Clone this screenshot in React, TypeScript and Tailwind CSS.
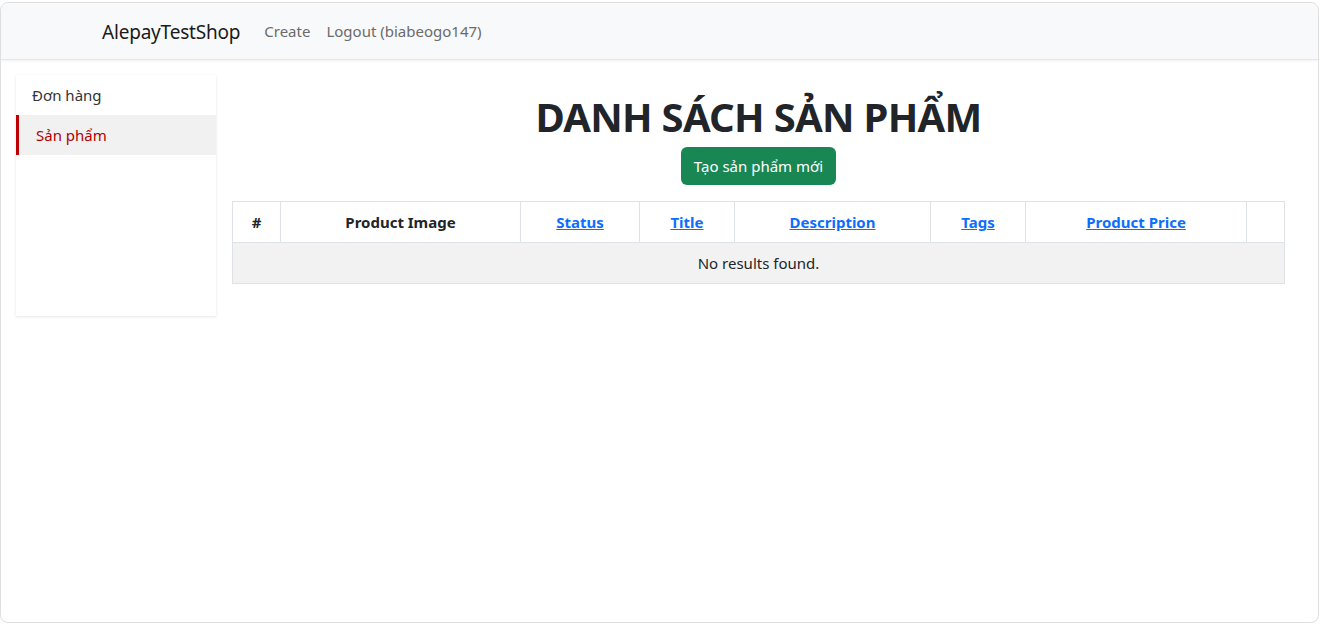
const columns = [
  { label: "#", w: "w-[48px]", link: false },
  { label: "Product Image", w: "w-[240px]", link: false },
  { label: "Status", w: "w-[119px]", link: true },
  { label: "Title", w: "w-[95px]", link: true },
  { label: "Description", w: "w-[196px]", link: true },
  { label: "Tags", w: "w-[95px]", link: true },
  { label: "Product Price", w: "w-[221px]", link: true },
  { label: "", w: "", link: false },
];

const Navbar = () => (
  <nav className="h-[57px] bg-[#f8f9fa] border-b border-[#e6e6e6] shadow-[0_1px_3px_rgba(0,0,0,0.06)] flex items-center pl-[101px]">
    <span className="text-[19px] tracking-[-0.2px] text-[#1a1a1a] mr-[24px] mt-[3px]">AlepayTestShop</span>
    <a className="text-[15px] text-[#6b6b6b] mr-[16px]">Create</a>
    <a className="text-[15px] text-[#6b6b6b]">Logout (biabeogo147)</a>
  </nav>
);

const Sidebar = () => (
  <aside className="w-[200px] h-[241px] bg-white shadow-[0_1px_3px_rgba(0,0,0,0.1)]">
    <div className="h-[40px] flex items-center pl-[16px] text-[15px] text-[#333]">Đơn hàng</div>
    <div className="h-[40px] flex items-center pl-[17px] text-[15px] text-[#b00000] bg-[#f1f1f1] border-l-[3px] border-[#c00000]">
      Sản phẩm
    </div>
  </aside>
);

export default function App() {
  return (
    <div className="w-[1322px] h-[624px] bg-white pt-[2px] pr-[3px]" style={{ fontFamily: '"Noto Sans", "Open Sans", sans-serif' }}>
      <div className="h-[621px] border border-[#dedede] rounded-[8px] overflow-hidden bg-white">
        <Navbar />
        <div className="flex pt-[15px] pl-[15px] gap-[16px]">
          <Sidebar />
          <main className="w-[1053px] flex flex-col items-center">
            <h1 className="text-[40px] tracking-[-0.7px] font-bold text-[#212529] leading-[1.2] mt-[18px]">DANH SÁCH SẢN PHẨM</h1>
            <button className="mt-[6px] h-[38px] px-[13px] bg-[#198754] text-white text-[15px] rounded-[6px]">
              Tạo sản phẩm mới
            </button>
            <table className="mt-[16px] w-full table-fixed border-collapse border border-[#dee2e6] text-[15px]">
              <thead>
                <tr className="h-[41px]">
                  {columns.map((c, i) => (
                    <th key={i} className={`${c.w} border border-[#dee2e6] font-bold text-[#212529] text-center`}>
                      {c.link ? <a className="text-[#0d6efd] underline">{c.label}</a> : c.label}
                    </th>
                  ))}
                </tr>
              </thead>
              <tbody>
                <tr className="h-[41px] bg-[#f2f2f2]">
                  <td colSpan={8} className="text-center text-[#212529] border border-[#dee2e6]">No results found.</td>
                </tr>
              </tbody>
            </table>
          </main>
        </div>
      </div>
    </div>
  );
}
